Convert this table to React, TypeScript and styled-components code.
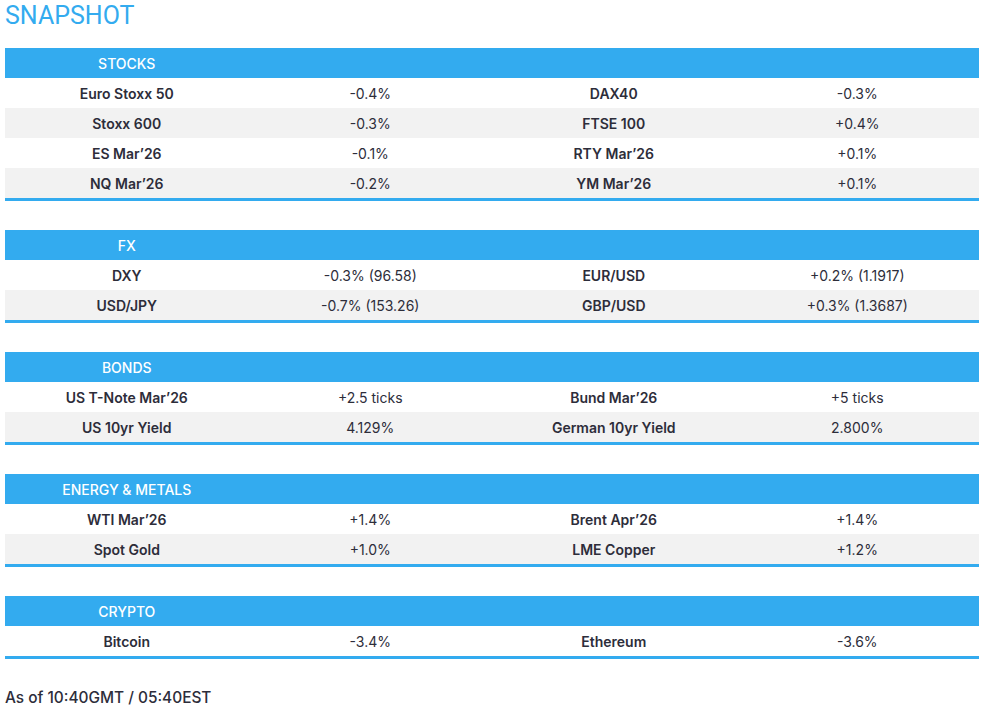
import React from "react";
import styled, { createGlobalStyle } from "styled-components";

const GlobalStyle = createGlobalStyle`
  html, body {
    margin: 0;
    padding: 0;
    background: #ffffff;
  }
  body {
    font-family: Inter, "Liberation Sans", sans-serif;
    color: #2d2d3a;
  }
`;

const Page = styled.div`
  padding: 0 6px 0 5px;
  width: 974px;
`;

const Title = styled.h1`
  margin: 0;
  padding-top: 1px;
  height: 47px;
  font-family: Roboto, "Liberation Sans", sans-serif;
  font-size: 25px;
  font-weight: 400;
  line-height: 30px;
  color: #33abef;
`;

const Section = styled.section`
  margin-bottom: 29px;
  border-bottom: 3px solid #33abef;
`;

const Row = styled.div<{ $striped?: boolean; $head?: boolean }>`
  display: grid;
  grid-template-columns: repeat(4, 1fr);
  height: 30px;
  align-items: center;
  background: ${(p) => (p.$head ? "#33abef" : p.$striped ? "#f2f2f2" : "#ffffff")};
  color: ${(p) => (p.$head ? "#ffffff" : "#2d2d3a")};
`;

const Cell = styled.div<{ $label?: boolean }>`
  text-align: center;
  font-size: 14px;
  font-weight: ${(p) => (p.$label ? 600 : 400)};
  white-space: nowrap;
`;

const HeadCell = styled(Cell)`
  font-weight: 500;
`;

const Footer = styled.div`
  font-size: 15.4px;
  font-weight: 500;
  line-height: 20px;
  color: #2d2d3a;
`;

type Pair = [string, string, string, string];

interface Block {
  title: string;
  rows: Pair[];
}

const blocks: Block[] = [
  {
    title: "STOCKS",
    rows: [
      ["Euro Stoxx 50", "-0.4%", "DAX40", "-0.3%"],
      ["Stoxx 600", "-0.3%", "FTSE 100", "+0.4%"],
      ["ES Mar’26", "-0.1%", "RTY Mar’26", "+0.1%"],
      ["NQ Mar’26", "-0.2%", "YM Mar’26", "+0.1%"],
    ],
  },
  {
    title: "FX",
    rows: [
      ["DXY", "-0.3% (96.58)", "EUR/USD", "+0.2% (1.1917)"],
      ["USD/JPY", "-0.7% (153.26)", "GBP/USD", "+0.3% (1.3687)"],
    ],
  },
  {
    title: "BONDS",
    rows: [
      ["US T-Note Mar’26", "+2.5 ticks", "Bund Mar’26", "+5 ticks"],
      ["US 10yr Yield", "4.129%", "German 10yr Yield", "2.800%"],
    ],
  },
  {
    title: "ENERGY & METALS",
    rows: [
      ["WTI Mar’26", "+1.4%", "Brent Apr’26", "+1.4%"],
      ["Spot Gold", "+1.0%", "LME Copper", "+1.2%"],
    ],
  },
  {
    title: "CRYPTO",
    rows: [["Bitcoin", "-3.4%", "Ethereum", "-3.6%"]],
  },
];

const App: React.FC = () => {
  return (
    <>
      <GlobalStyle />
      <Page>
        <Title>SNAPSHOT</Title>
        {blocks.map((block) => (
          <Section key={block.title}>
            <Row $head>
              <HeadCell>{block.title}</HeadCell>
              <div />
              <div />
              <div />
            </Row>
            {block.rows.map((r, i) => (
              <Row key={r[0]} $striped={i % 2 === 1}>
                <Cell $label>{r[0]}</Cell>
                <Cell>{r[1]}</Cell>
                <Cell $label>{r[2]}</Cell>
                <Cell>{r[3]}</Cell>
              </Row>
            ))}
          </Section>
        ))}
        <Footer>As of 10:40GMT / 05:40EST</Footer>
      </Page>
    </>
  );
};

export default App;
